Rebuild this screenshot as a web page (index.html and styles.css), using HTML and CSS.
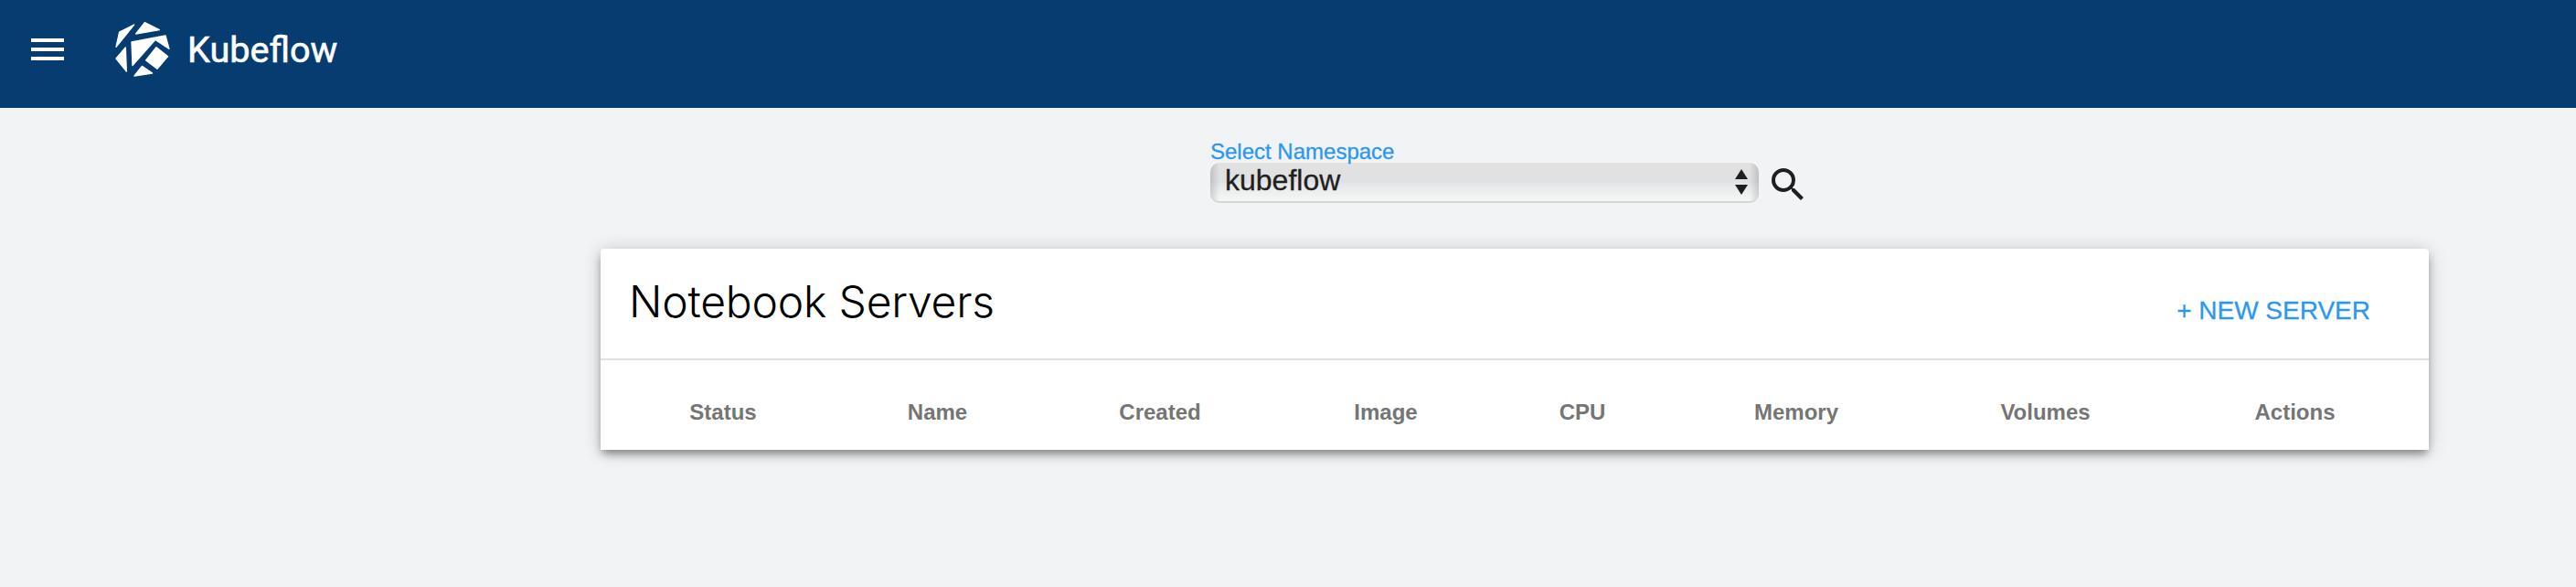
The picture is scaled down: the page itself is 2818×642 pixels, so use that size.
FILE: index.html
```html
<!DOCTYPE html>
<html lang="en">
<head>
<meta charset="utf-8">
<title>Kubeflow</title>
<link rel="stylesheet" href="styles.css">
</head>
<body>
<header class="topbar">
  <button class="menu" aria-label="Menu"><span></span><span></span><span></span></button>
  <svg class="logo" viewBox="42 36 192 192" fill="#fff" stroke="#fff" stroke-width="4" stroke-linejoin="round">
    <path d="M62 75 110 51 51 124Z"/>
    <path d="M145 44 193 68 116 81Z"/>
    <path d="M102 108 213 87 225 130 180 100 105 185Z"/>
    <path d="M82 126 85 204 51 162Z"/>
    <path d="M183 125 221 155 186 196 149 168Z"/>
    <path d="M136 187 170 210 111 219Z"/>
  </svg>
  <span class="brand">Kubeflow</span>
</header>
<main>
  <section class="namespace">
    <div class="field">
      <label class="label">Select Namespace</label>
      <div class="select" role="combobox">
        <span>kubeflow</span>
        <svg class="arrows" viewBox="0 0 14 28" fill="#1f1f1f"><path d="M7 0 14 11H0Z"/><path d="M0 17H14L7 28Z"/></svg>
      </div>
    </div>
    <svg class="search" viewBox="0 0 24 24" fill="#1f1f1f"><path d="M15.5 14h-.79l-.28-.27A6.471 6.471 0 0 0 16 9.5 6.5 6.5 0 1 0 9.5 16c1.61 0 3.09-.59 4.23-1.57l.27.28v.79l5 4.99L20.49 19l-4.99-5zm-6 0C7.01 14 5 11.99 5 9.5S7.01 5 9.5 5 14 7.01 14 9.5 11.99 14 9.5 14z"/></svg>
  </section>
  <section class="card">
    <div class="card-head">
      <h1>Notebook Servers</h1>
      <button class="new">+ NEW SERVER</button>
    </div>
    <div class="columns">
      <span>Status</span><span>Name</span><span>Created</span><span>Image</span><span>CPU</span><span>Memory</span><span>Volumes</span><span>Actions</span>
    </div>
  </section>
</main>
</body>
</html>
```
FILE: styles.css
```css
* { box-sizing: border-box; }
body {
  margin: 0;
  height: 642px;
  overflow: hidden;
  background: #f1f3f5;
  font-family: "Liberation Sans", Arial, sans-serif;
}
button { border: 0; padding: 0; background: none; font: inherit; }
.topbar {
  display: flex;
  height: 118px;
  padding: 22px 0 0 34px;
  background: #073c71;
}
.menu {
  display: flex;
  flex-direction: column;
  gap: 6px;
  width: 36px;
  height: 24px;
  margin-top: 20px;
}
.menu span { width: 36px; height: 4px; background: #fff; }
.logo { width: 64px; height: 64px; margin-left: 54px; }
.brand {
  margin: 9px 0 0 17px;
  color: #fff;
  font: 400 39.6px/48px Roboto, sans-serif;
  -webkit-text-stroke: .6px #fff;
}
.namespace {
  display: flex;
  padding: 34px 0 0 1324px;
  height: 154px;
}
.field { width: 600px; }
.label {
  display: block;
  height: 26px;
  line-height: 28px;
  font-size: 24px;
  color: #2b98f0;
  -webkit-text-stroke: .3px #2b98f0;
}
.select {
  display: flex;
  justify-content: space-between;
  height: 44px;
  padding: 0 12px 0 16px;
  border-bottom: 2px solid #d3d5d6;
  border-radius: 10px;
  background:
    linear-gradient(90deg, rgba(0,0,0,.14), transparent 10px, transparent calc(100% - 10px), rgba(0,0,0,.14)),
    linear-gradient(#e0e1e0 0, #e0e1e0 12px, #e0e1e2 21px, #e4e5e7 22px, #f4f5f4 40px);
  color: #1f1f1f;
  font-size: 32px;
  line-height: 38px;
  -webkit-text-stroke: .3px #1f1f1f;
}
.arrows { width: 14px; height: 28px; margin-top: 7px; }
.search { width: 48px; height: 48px; margin: 26px 0 0 8px; }
.card {
  width: 2000px;
  height: 220px;
  margin-left: 657px;
  background: #fff;
  border-radius: 4px 4px 0 0;
  box-shadow: 0 6px 10px -2px rgba(0,0,0,.4), 0 2px 20px rgba(0,0,0,.2);
}
.card-head {
  display: flex;
  justify-content: space-between;
  height: 122px;
  padding: 0 64px 0 31px;
  border-bottom: 2px solid #e0e0e0;
}
h1 {
  margin: 29px 0 0;
  font: 300 48px/58px Inter, sans-serif;
  letter-spacing: -.2px;
  color: #000;
}
.new { height: 32px; margin-top: 52px; color: #2b98f0; font-size: 28px; line-height: 32px; -webkit-text-stroke: .3px #2b98f0; }
.columns {
  display: grid;
  grid-template-columns: 268px 201px 286px 208px 222px 246px 299px 247px;
  padding-top: 43px;
  color: #757575;
  font-weight: 700;
  font-size: 24px;
  line-height: 28px;
  text-align: center;
}
```
